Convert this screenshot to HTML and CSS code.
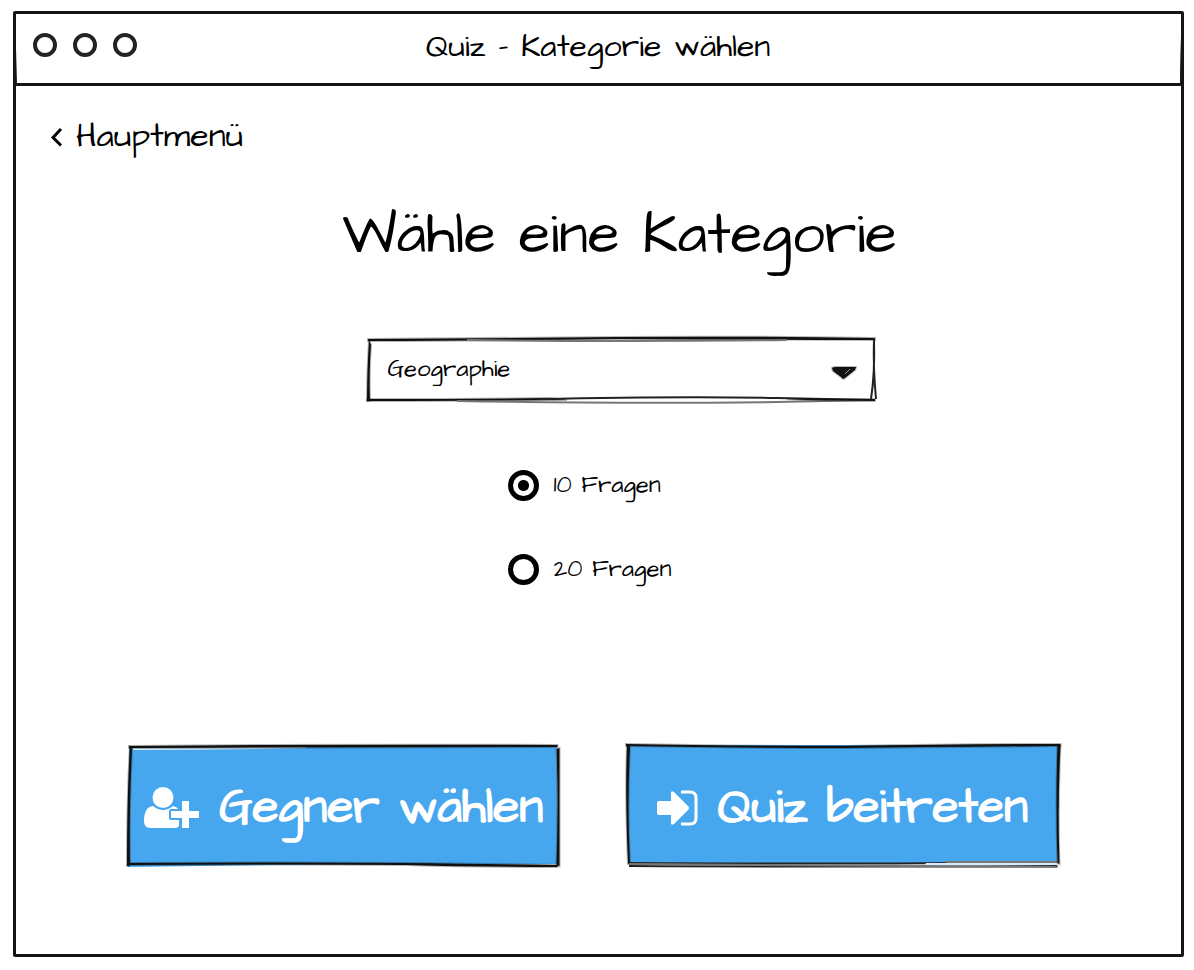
FILE: index.html
```html
<!DOCTYPE html>
<html lang="de">
<head>
<meta charset="utf-8">
<meta name="viewport" content="width=device-width, initial-scale=1">
<title>Quiz - Kategorie wählen</title>
<link rel="stylesheet" href="styles.css">
</head>
<body>
<div class="window">
  <header class="titlebar">
    <svg class="titlebar-ink" viewBox="0 0 1168 74" preserveAspectRatio="none" aria-hidden="true">
      <path d="M2 2Q3 38 4 73L2 73ZM1166 3Q1164 44 1164 73L1167 73Z"/>
    </svg>
    <div class="dots" aria-hidden="true"><span class="dot"></span><span class="dot"></span><span class="dot"></span></div>
    <span class="window-title">Quiz - Kategorie wählen</span>
  </header>
  <main class="content">
    <a class="back" href="#">
      <svg class="back-icon" viewBox="0 0 12 20" aria-hidden="true"><path d="M10 2L2 10.500L10 18.500"/></svg>
      Hauptmenü
    </a>
    <form class="quiz-form">
      <h1 class="heading"><label for="category">Wähle eine Kategorie</label></h1>
      <div class="select-box">
        <select id="category" class="select"><option>Geographie</option></select>
        <svg class="sketch" viewBox="0 0 510 66" preserveAspectRatio="none" aria-hidden="true">
          <path class="ink" d="M1 2Q150 1 250 0Q380 -1 508 1L508 3Q380 3 250 2Q120 4 1 4Z"/>
          <path class="soft" d="M100 3Q260 5 420 3"/>
          <path class="ink" d="M2 3L4 8Q2 35 3 64L0 64Q0 35 2 3Z"/>
          <path class="ink" d="M0 62Q100 62 180 61L200 63Q110 64 0 64Z"/>
          <path class="line" d="M170 62Q320 59 410 61L507 63"/>
          <path class="soft" d="M90 64Q260 67 410 65L508 63"/>
          <path class="ink" d="M420 62L508 62L508 64L440 63Z"/>
          <path class="line" d="M507 2Q506 30 509 62M507 2Q508 36 504 62"/>
        </svg>
        <svg class="arrow" viewBox="0 0 26 14" aria-hidden="true"><path class="ink" d="M1 2Q2 1 5 1L25 1L24 4L14 12Q12 14 10 11L2 5Z"/><path class="shine" d="M14 8L19 3"/></svg>
      </div>
      <fieldset class="options" aria-label="Anzahl der Fragen">
        <label class="option"><input class="radio" type="radio" name="count" checked>10 Fragen</label>
        <label class="option"><input class="radio" type="radio" name="count">20 Fragen</label>
      </fieldset>
      <div class="actions">
        <button class="action" type="button">
          <svg class="sketch" viewBox="0 0 434 121" preserveAspectRatio="none" aria-hidden="true">
            <path class="fill" d="M2 3L430 3L432 119L220 119L1 122Z"/>
            <path class="glow" d="M6 5Q90 5 180 3"/>
            <path class="ink" d="M2 2Q220 0 431 1L431 3Q220 3 2 4Z"/>
            <path class="ink" d="M3 3L5 5Q2 65 3 117L2 121L0 121Q0 50 3 3Z"/>
            <path class="ink" d="M1 118Q170 117 280 118Q360 119 431 120L431 122Q350 122 280 120Q150 119 1 120Z"/>
            <path class="ink" d="M430 5L433 4Q433 70 433 121L430 120Q432 60 430 5Z"/>
          </svg>
          <svg class="user-icon" viewBox="0 0 56 42" aria-hidden="true">
            <circle cx="19" cy="10.500" r="10.500"/>
            <path d="M9 19Q19 27 29 19Q33 20 34 22H27Q25 22 25 25V31Q25 33 27 33H35V39Q34 41 31 41H6Q0 41 0 34Q0 20 9 19Z"/>
            <path d="M38 14H45V24H55V31H45V41H38V31H27V24H38Z"/>
          </svg>
          <span>Gegner wählen</span>
        </button>
        <button class="action" type="button">
          <svg class="sketch" viewBox="0 0 434 121" preserveAspectRatio="none" aria-hidden="true">
            <path class="fill" d="M1 1L433 1L432 118L3 118Z"/>
            <path class="ink" d="M0 0Q100 2 220 2Q330 0 435 0L435 2Q310 3 220 4Q110 4 0 2Z"/>
            <path class="ink" d="M1 1L4 3Q1 60 4 119L2 119Q-1 50 1 1Z"/>
            <path class="line" d="M2 118Q220 119 330 118M3 121Q240 122 432 121"/>
            <path class="soft" d="M3 119Q240 121 432 122M320 117L432 117"/>
            <path class="glow" d="M300 119L432 119"/>
            <path class="ink" d="M432 1L435 2Q432 60 434 119L432 118Q430 60 432 1Z"/>
          </svg>
          <svg class="join-icon" viewBox="0 0 42 36" aria-hidden="true">
            <path d="M2 11H14V3Q14 0 17 2L31 16Q33 18 31 20L17 34Q14 36 14 33V25H2Q0 25 0 23V13Q0 11 2 11Z"/>
            <path class="bracket" d="M24 2H33Q39 2 39 8V28Q39 34 33 34H24"/>
          </svg>
          <span>Quiz beitreten</span>
        </button>
      </div>
    </form>
  </main>
</div>
</body>
</html>
```
FILE: styles.css
```css
* { box-sizing: border-box; }

body {
  margin: 0;
  padding: 11px 10px 13px 13px;
  background: #fff;
  color: #000;
  font-family: "Architects Daughter", Inter, "Open Sans", sans-serif;
}

.window {
  display: flex;
  flex-direction: column;
  min-height: calc(100vh - 24px);
  border: 3px solid #151515;
  border-radius: 2px;
}

.titlebar {
  position: relative;
  display: grid;
  grid-template-columns: 1fr auto 1fr;
  align-items: center;
  height: 72px;
  padding: 0 18px 4px 17px;
  border-bottom: 3px solid #151515;
}

.titlebar-ink {
  position: absolute;
  inset: -3px;
  width: calc(100% + 6px);
  height: 74px;
  fill: #151515;
}

.dots { display: flex; gap: 16px; padding-bottom: 4px; }
.dot { width: 24px; height: 24px; border: 4px solid #222; border-radius: 50%; }
.window-title { font-size: 32px; line-height: 36px; }

.content { flex: 1; padding: 28px 0 0; }

.back {
  display: inline-flex;
  align-items: center;
  gap: 13px;
  margin-left: 35px;
  color: inherit;
  font-size: 34px;
  line-height: 44px;
  text-decoration: none;
}
.back-icon { width: 12px; height: 20px; margin-top: 2px; fill: none; stroke: #000; stroke-width: 3; }

.quiz-form { display: flex; flex-direction: column; align-items: center; }
.heading {
  margin: 41px 0 0 42px;
  font-size: 58px;
  font-weight: 400;
  line-height: 72px;
}

.select-box { position: relative; width: 510px; max-width: 90%; margin: 66px 0 0 46px; }
.select {
  display: block;
  width: 100%;
  height: 66px;
  padding: 0 56px 3px 21px;
  border: 0;
  background: transparent;
  appearance: none;
  color: #000;
  font: inherit;
  font-size: 24px;
}
.arrow { position: absolute; top: 29px; right: 20px; width: 26px; height: 14px; pointer-events: none; }

.sketch {
  position: absolute;
  inset: 0;
  width: 100%;
  height: 100%;
  overflow: visible;
  pointer-events: none;
}
.ink { fill: #111; stroke: #111; stroke-width: 2; stroke-opacity: 0.3; }
.line { fill: none; stroke: #222; stroke-width: 2; }
.soft { fill: none; stroke: #777; stroke-width: 2; }
.shine { fill: none; stroke: #999; stroke-width: 1; }
.fill { fill: #46a7ef; }
.glow { fill: none; stroke: #d8ecfb; stroke-width: 2; }

.options {
  display: flex;
  flex-direction: column;
  gap: 50px;
  width: 226px;
  margin: 65px 0 0 44px;
  padding: 0;
  border: 0;
}
.option { display: flex; align-items: center; gap: 15px; font-size: 24px; line-height: 34px; }
.radio {
  width: 31px;
  height: 31px;
  margin: 0;
  border: 5px solid #000;
  border-radius: 50%;
  appearance: none;
}
.radio:checked { background: radial-gradient(circle, #000 5px, transparent 6px); }

.actions {
  display: grid;
  grid-template-columns: 1fr 1fr;
  gap: 65px;
  width: 80%;
  margin-top: 158px;
  margin-right: 11px;
}
.action {
  position: relative;
  display: flex;
  align-items: center;
  justify-content: center;
  gap: 19px;
  height: 122px;
  padding: 6px 8px 0;
  border: 0;
  background: transparent;
  color: #fff;
  font: inherit;
  font-size: 48px;
  font-weight: 700;
  white-space: nowrap;
}
.action span, .user-icon, .join-icon { position: relative; }
.user-icon { flex: none; width: 56px; height: 42px; fill: #fff; }
.join-icon { flex: none; width: 42px; height: 36px; fill: #fff; }
.bracket { fill: none; stroke: #fff; stroke-width: 3; }
```
